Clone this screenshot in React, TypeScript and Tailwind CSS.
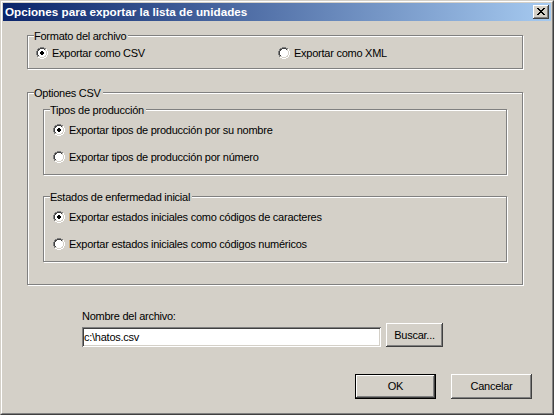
import React from "react";

const RADIO_MAP = [
  "....OOOO....",
  "..OOIIIIOO..",
  ".OIIFFFFIIO.",
  ".OIFFFFFFIO.",
  "OIFFFFFFFFIO",
  "OIFFFFFFFFIO",
  "OIFFFFFFFFIO",
  "OIFFFFFFFFIO",
  ".OIFFFFFFIO.",
  ".OIIFFFFIIO.",
  "..OOIIIIOO..",
  "....OOOO....",
];

const DOT = [
  [5, 4], [6, 4],
  [4, 5], [5, 5], [6, 5], [7, 5],
  [4, 6], [5, 6], [6, 6], [7, 6],
  [5, 7], [6, 7],
];

function RadioIcon({ checked }: { checked: boolean }) {
  const rects: React.ReactElement[] = [];
  RADIO_MAP.forEach((row, y) => {
    row.split("").forEach((c, x) => {
      let fill = "";
      const tl = x + y <= 10;
      if (c === "O") fill = tl ? "#808080" : "#ffffff";
      else if (c === "I") fill = tl ? "#404040" : "#d4d0c8";
      else if (c === "F") fill = "#ffffff";
      if (fill) rects.push(<rect key={`${x}-${y}`} x={x} y={y} width={1} height={1} fill={fill} />);
    });
  });
  if (checked) {
    DOT.forEach(([x, y]) => rects.push(<rect key={`d${x}-${y}`} x={x} y={y} width={1} height={1} fill="#000" />));
  }
  return (
    <svg width="12" height="12" viewBox="0 0 12 12" shapeRendering="crispEdges" className="shrink-0">
      {rects}
    </svg>
  );
}

function Radio({ label, checked = false, className = "" }: { label: string; checked?: boolean; className?: string }) {
  return (
    <div className={`flex items-center h-[14px] gap-[4px] ${className}`}>
      <RadioIcon checked={checked} />
      <span className="leading-[13px] whitespace-nowrap">{label}</span>
    </div>
  );
}

function GroupBox({ label, className = "", children }: { label: string; className?: string; children?: React.ReactNode }) {
  return (
    <div className={`relative border border-[#808080] shadow-[inset_1px_1px_0_#fff,1px_1px_0_#fff] ${className}`}>
      <span className="absolute left-[6px] top-[-6px] pr-[2px] bg-[#d4d0c8] leading-[13px] whitespace-nowrap">{label}</span>
      {children}
    </div>
  );
}

const RAISED =
  "bg-[#d4d0c8] shadow-[inset_-1px_-1px_0_#404040,inset_1px_1px_0_#fff,inset_-2px_-2px_0_#808080,inset_2px_2px_0_#d4d0c8]";

function CloseGlyph() {
  const map = ["XX....XX", ".XX..XX.", "..XXXX..", "...XX...", "..XXXX..", ".XX..XX.", "XX....XX"];
  const rects: React.ReactElement[] = [];
  map.forEach((row, y) =>
    row.split("").forEach((c, x) => {
      if (c === "X") rects.push(<rect key={`${x}-${y}`} x={x} y={y} width={1} height={1} fill="#000" />);
    })
  );
  return (
    <svg width="8" height="7" viewBox="0 0 8 7" shapeRendering="crispEdges">
      {rects}
    </svg>
  );
}

export default function App() {
  return (
    <div className="w-[554px] h-[415px] bg-[#d4d0c8] font-['Liberation_Sans',Arial,sans-serif] text-[11px] leading-[13px] tracking-[-0.25px] text-black border border-t-[#d4d0c8] border-l-[#d4d0c8] border-r-[#404040] border-b-[#404040]">
      <div className="h-full flex flex-col p-px border border-t-white border-l-white border-r-[#808080] border-b-[#808080]">
        {/* Title bar */}
        <div className="h-[18px] shrink-0 flex items-center justify-between pl-[2px] pr-[2px] bg-[linear-gradient(to_right,#0a246a,#a6caf0)]">
          <span className="text-white font-bold text-[11.7px] tracking-normal leading-[14px] whitespace-nowrap">
            Opciones para exportar la lista de unidades
          </span>
          <div className={`w-[16px] h-[14px] flex justify-center pt-[3px] ${RAISED}`}>
            <CloseGlyph />
          </div>
        </div>

        {/* Group boxes */}
        <div className="px-[24px]">
          <GroupBox label="Formato del archivo" className="mt-[14px] h-[34px] w-[496px] flex items-start pl-[8px] pt-[10px]">
            <Radio label="Exportar como CSV" checked className="w-[242px]" />
            <Radio label="Exportar como XML" />
          </GroupBox>

          <GroupBox label="Optiones CSV" className="mt-[23px] h-[193px] w-[496px] pl-[15px] pt-[16px]">
            <GroupBox label="Tipos de producción" className="w-[464px] h-[66px] flex flex-col pl-[9px] pt-[13px] gap-[13px]">
              <Radio label="Exportar tipos de producción por su nombre" checked />
              <Radio label="Exportar tipos de producción por número" />
            </GroupBox>
            <GroupBox label="Estados de enfermedad inicial" className="mt-[21px] w-[464px] h-[66px] flex flex-col pl-[9px] pt-[13px] gap-[13px]">
              <Radio label="Exportar estados iniciales como códigos de caracteres" checked />
              <Radio label="Exportar estados iniciales como códigos numéricos" />
            </GroupBox>
          </GroupBox>
        </div>

        {/* File name */}
        <div className="pl-[79px] mt-[25px]">
          <div className="leading-[13px]">Nombre del archivo:</div>
          <div className="flex items-end gap-[5px]">
            <div className="w-[299px] h-[20px] bg-white flex items-center pl-[2px] shadow-[inset_1px_1px_0_#808080,inset_-1px_-1px_0_#fff,inset_2px_2px_0_#404040,inset_-2px_-2px_0_#d4d0c8]">
              <span className="whitespace-nowrap">c:\hatos.csv</span>
            </div>
            <div className={`w-[57px] h-[24px] flex items-center justify-center ${RAISED}`}>Buscar...</div>
          </div>
        </div>

        {/* Buttons */}
        <div className="mt-[27px] flex justify-end gap-[15px] pr-[19px]">
          <div className="w-[81px] h-[25px] border border-black">
            <div className={`w-full h-full flex items-center justify-center ${RAISED}`}>OK</div>
          </div>
          <div className={`w-[81px] h-[25px] flex items-center justify-center ${RAISED}`}>Cancelar</div>
        </div>
      </div>
    </div>
  );
}
